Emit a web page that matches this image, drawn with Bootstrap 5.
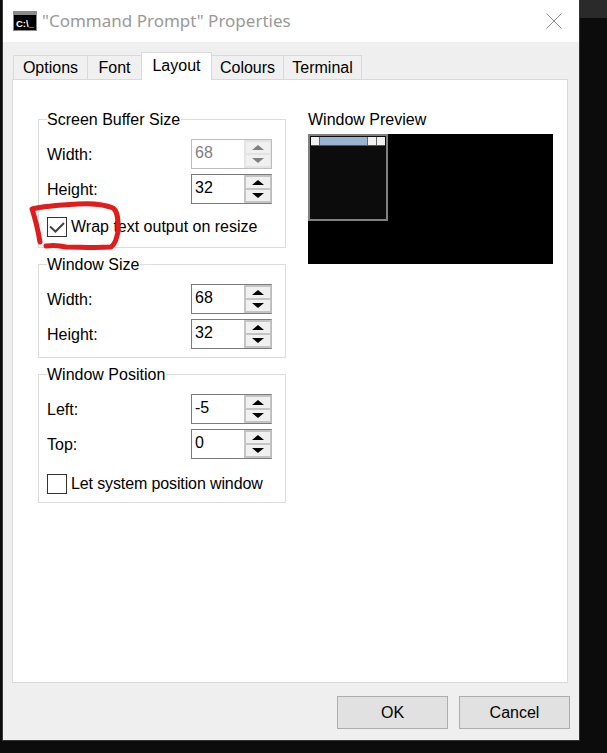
<!DOCTYPE html>
<html lang="en"><head><meta charset="utf-8">
<title>"Command Prompt" Properties</title>
<link href="https://cdn.jsdelivr.net/npm/bootstrap@5.3.0/dist/css/bootstrap.min.css" rel="stylesheet">
<style>
html,body{height:753px;overflow:hidden}
body{margin:0;background:#0c0c0c;font-family:"Liberation Sans",Arial,sans-serif;font-size:16px;line-height:20px;color:#000;position:relative;padding-left:2px}
.shell{width:605px;height:753px}
.win{width:578px;height:741px;background:#efefef;border-left:1px solid #3a3a3a;border-right:1px solid #333;border-bottom:1px solid #333}
.side{width:27px;height:18px;background:#2a2a2a}
.titlebar{height:42px;background:#fff;padding-left:10px;padding-right:17px}
.ttl{font-family:"Noto Sans","Open Sans",sans-serif;font-size:17px;color:#999;margin-left:5px;line-height:24px}
.tabbar{margin:10px 0 0 10px;height:27px;align-items:flex-end;padding-left:1px}
.tabi{height:24px;background:#f0f0f0;border:1px solid #d9d9d9;border-bottom:0;margin-left:-1px;text-align:center;line-height:24px;color:#000}
.tabi.act{background:#fff;position:relative;z-index:2;margin-bottom:-1px;height:28px;line-height:26px}
.t1{width:75px}.t2{width:55px}.t3{width:71px}.t4{width:73px}.t5{width:79px}
.panel{margin-left:9px;width:556px;height:604px;background:#fff;border:1px solid #d9d9d9;padding:27px 14px 0 25px}
.leftc{width:248px}
.grp{border:1px solid #dcdcdc;padding:0 13px 0 8px;margin:0 0 4px;min-width:0}
.grp legend{float:none;width:auto;font-size:16px;line-height:22px;margin:0 0 8px;padding:2px 1px 0 0}
.grow{height:30px;margin-bottom:5px}
.grow>span{padding-top:2px}
.g1{height:141px}.g2{height:106px}.g3{height:141px}
.spin{width:81px;height:30px;border:1px solid #7a7a7a;border-right-color:#bbb;background:#fff}
.spin.off{border-color:#bdbdbd;color:#808080}
.spinv{flex:1;padding:0 0 0 3px;line-height:26px}
.arrs{width:27px;background:#c4c4c4;padding:2px 1px 2px 2px;gap:2px}
.arrb{flex:1;background:#f0f0f0;align-items:center;justify-content:center}
.up{width:0;height:0;border-left:6px solid transparent;border-right:6px solid transparent;border-bottom:5px solid #000}
.dn{width:0;height:0;border-left:6px solid transparent;border-right:6px solid transparent;border-top:5px solid #000}
.off .up{border-bottom-color:#808080}.off .dn{border-top-color:#808080}
.off .arrs{background:#e3e3e3}
.chk{width:20px;height:20px;border:1px solid #333;background:#fff;margin-right:4px;flex:none;align-items:center;justify-content:center}
.cline{height:20px}
.cg1{margin-top:13px}
.cg3{margin-top:15px}
.cg3 span{letter-spacing:-.12px}
.rightc{margin-left:22px;width:245px}
.pvt{line-height:20px;margin-top:3px;margin-bottom:4px}
.pv{width:245px;height:130px;background:#000}
.mini{width:80px;height:87px;border:2px solid #808080;background:#0c0c0c;padding:1px}
.mt{height:8px;gap:1px;background:#666;margin-bottom:1px;box-shadow:0 1px 0 #555}
.mc{width:8px;background:#f0f0f0}
.mb{flex:1;background:#99b4d1}
.foot{margin-top:13px;padding-right:9px;gap:11px}
.fbtn{width:111px;height:33px;padding:0;background:#e1e1e1;border:1px solid #adadad;border-radius:0;color:#000;font-size:16px;line-height:30px}
.scrib{position:absolute;left:0;top:0;width:130px;height:260px;pointer-events:none;z-index:5}
</style></head>
<body>
<div class="shell d-flex">
<div class="win d-flex flex-column">
  <div class="titlebar d-flex align-items-center">
    <svg width="24" height="20" viewBox="0 0 24 20"><rect width="24" height="20" fill="#8a8a8a"/><rect x="1" y="4" width="22" height="15" fill="#000"/><text x="3" y="15.500" font-family="Liberation Sans,sans-serif" font-weight="700" font-size="9.500" fill="#fff">C:\_</text></svg>
    <span class="ttl flex-grow-1">"Command Prompt" Properties</span>
    <svg width="16" height="16" viewBox="0 0 16 16"><path d="M.5.5l15 15M15.500.5l-15 15" stroke="#8c8c8c" stroke-width="1" fill="none"/></svg>
  </div>
  <div class="tabbar d-flex">
    <div class="tabi t1">Options</div><div class="tabi t2">Font</div><div class="tabi t3 act">Layout</div><div class="tabi t4">Colours</div><div class="tabi t5">Terminal</div>
  </div>
  <div class="panel d-flex">
    <div class="leftc">
      <fieldset class="grp g1"><legend>Screen Buffer Size</legend>
        <div class="grow d-flex justify-content-between align-items-center"><span>Width:</span>
          <div class="spin off d-flex"><div class="spinv">68</div><div class="arrs d-flex flex-column"><div class="arrb d-flex"><i class="up"></i></div><div class="arrb d-flex"><i class="dn"></i></div></div></div></div>
        <div class="grow d-flex justify-content-between align-items-center"><span>Height:</span>
          <div class="spin d-flex"><div class="spinv">32</div><div class="arrs d-flex flex-column"><div class="arrb d-flex"><i class="up"></i></div><div class="arrb d-flex"><i class="dn"></i></div></div></div></div>
        <div class="cline cg1 d-flex align-items-center"><div class="chk d-flex"><svg width="18" height="18" viewBox="0 0 18 18"><path d="M2 8.500L7.500 13.500L16 5" fill="none" stroke="#444" stroke-width="2"/></svg></div><span>Wrap text output on resize</span></div>
      </fieldset>
      <fieldset class="grp g2"><legend>Window Size</legend>
        <div class="grow d-flex justify-content-between align-items-center"><span>Width:</span>
          <div class="spin d-flex"><div class="spinv">68</div><div class="arrs d-flex flex-column"><div class="arrb d-flex"><i class="up"></i></div><div class="arrb d-flex"><i class="dn"></i></div></div></div></div>
        <div class="grow d-flex justify-content-between align-items-center"><span>Height:</span>
          <div class="spin d-flex"><div class="spinv">32</div><div class="arrs d-flex flex-column"><div class="arrb d-flex"><i class="up"></i></div><div class="arrb d-flex"><i class="dn"></i></div></div></div></div>
      </fieldset>
      <fieldset class="grp g3"><legend>Window Position</legend>
        <div class="grow d-flex justify-content-between align-items-center"><span>Left:</span>
          <div class="spin d-flex"><div class="spinv">-5</div><div class="arrs d-flex flex-column"><div class="arrb d-flex"><i class="up"></i></div><div class="arrb d-flex"><i class="dn"></i></div></div></div></div>
        <div class="grow d-flex justify-content-between align-items-center"><span>Top:</span>
          <div class="spin d-flex"><div class="spinv">0</div><div class="arrs d-flex flex-column"><div class="arrb d-flex"><i class="up"></i></div><div class="arrb d-flex"><i class="dn"></i></div></div></div></div>
        <div class="cline cg3 d-flex align-items-center"><div class="chk d-flex"></div><span>Let system position window</span></div>
      </fieldset>
    </div>
    <div class="rightc">
      <div class="pvt">Window Preview</div>
      <div class="pv"><div class="mini"><div class="mt d-flex"><div class="mc"></div><div class="mb"></div><div class="mc"></div><div class="mc"></div></div></div></div>
    </div>
  </div>
  <div class="foot d-flex justify-content-end">
    <button class="btn fbtn" type="button">OK</button><button class="btn fbtn" type="button">Cancel</button>
  </div>
</div>
<div class="side"></div>
</div>
<svg class="scrib" viewBox="0 0 130 260"><path d="M40 242C38 230 35 218 32 209C44 206 60 205 78 204C92 203 106 205 113 208C119 212 118 224 118 232C116 240 115 244 111 247C95 248 80 247 66 247C58 245 52 245 46 246" fill="none" stroke="#e01c1c" stroke-width="5" stroke-linecap="round" stroke-linejoin="round"/></svg>
</body></html>
